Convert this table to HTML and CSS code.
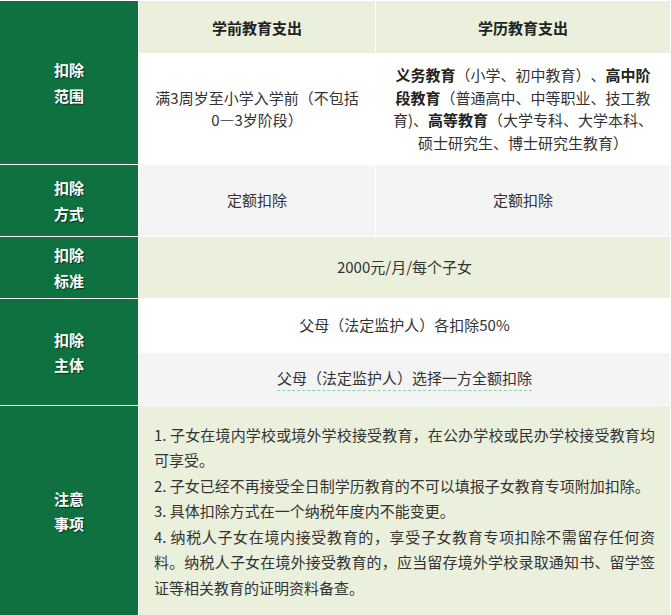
FILE: index.html
```html
<!DOCTYPE html>
<html lang="zh-CN">
<head>
<meta charset="utf-8">
<title>子女教育专项附加扣除</title>
<link rel="stylesheet" href="styles.css">
</head>
<body>
<div class="sheet">
  <div class="label label-scope"><span>扣除<br>范围</span></div>
  <div class="head">学前教育支出</div>
  <div class="head">学历教育支出</div>
  <div class="cell white wrap">满3周岁至小学入学前（不包括0—3岁阶段）</div>
  <div class="cell white wrap"><span><b>义务教育</b>（小学、初中教育）、<b>高中阶段教育</b>（普通高中、中等职业、技工教育)、<b>高等教育</b>（大学专科、大学本科、硕士研究生、博士研究生教育）</span></div>

  <div class="label"><span>扣除<br>方式</span></div>
  <div class="cell gray">定额扣除</div>
  <div class="cell gray">定额扣除</div>

  <div class="label"><span>扣除<br>标准</span></div>
  <div class="cell beige span2">2000元/月/每个子女</div>

  <div class="label label-subject"><span>扣除<br>主体</span></div>
  <div class="cell white span2">父母（法定监护人）各扣除50%</div>
  <div class="cell gray span2"><span class="dashed">父母（法定监护人）选择一方全额扣除</span></div>

  <div class="label"><span>注意<br>事项</span></div>
  <div class="cell beige span2 notes">
    <div class="notes-body">
      <p>1. 子女在境内学校或境外学校接受教育，在公办学校或民办学校接受教育均可享受。</p>
      <p>2. 子女已经不再接受全日制学历教育的不可以填报子女教育专项附加扣除。</p>
      <p>3. 具体扣除方式在一个纳税年度内不能变更。</p>
      <p>4. 纳税人子女在境内接受教育的，享受子女教育专项扣除不需留存任何资料。纳税人子女在境外接受教育的，应当留存境外学校录取通知书、留学签证等相关教育的证明资料备查。</p>
    </div>
  </div>
</div>
</body>
</html>
```
FILE: styles.css
```css
html, body {
  margin: 0;
  padding: 0;
  background: #fff;
}

body {
  font-family: "Noto Sans CJK SC", "Noto Sans", sans-serif;
  font-size: 15px;
  color: #333;
  text-spacing-trim: space-all;
}

.sheet {
  width: 670px;
  padding-top: 1px;
  display: grid;
  grid-template-columns: 138px 236px 1fr;
  grid-template-rows: 52px 110px 71px 61px 53px 52px 210px;
  gap: 1px;
  background: #fff;
}

.label {
  background: #0f7140;
  color: #fff;
  font-weight: bold;
  line-height: 25.5px;
  display: flex;
  align-items: center;
  justify-content: center;
  text-align: center;
  text-shadow: 1px 1px 1px rgba(0, 0, 0, 0.55);
}

.label-scope {
  grid-row: span 2;
}

.label-subject {
  grid-row: span 2;
}

.head {
  background: #ebf0dc;
  color: #222;
  font-weight: bold;
  display: flex;
  align-items: center;
  justify-content: center;
}

.cell {
  display: flex;
  align-items: center;
  justify-content: center;
  text-align: center;
  padding: 0 15px;
  line-height: 22.5px;
}

.cell b {
  color: #222;
}

.white {
  background: #fff;
}

.gray {
  background: #f4f4f4;
}

.beige {
  background: #ebf0dc;
}

.span2 {
  grid-column: span 2;
}

.dashed {
  border-bottom: 1px dashed #86dca8;
}

.notes {
  justify-content: flex-start;
  text-align: justify;
  line-height: 25.5px;
}

.notes-body p {
  margin: 0;
}
```
